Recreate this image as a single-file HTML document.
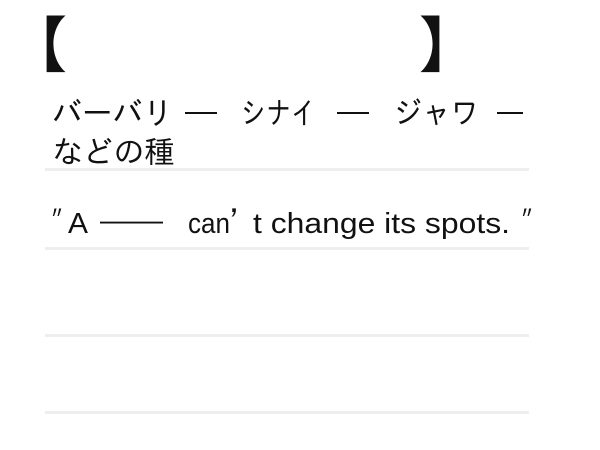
<!DOCTYPE html>
<html><head><meta charset="utf-8"><style>
body{margin:0;width:600px;height:450px;background:#fff;position:relative;overflow:hidden;font-family:"IPAGothic","Noto Sans CJK JP",sans-serif;color:#111}
.a{position:absolute;white-space:nowrap}
.br{font-size:60px;line-height:60px;top:12px;font-weight:bold;font-family:"Noto Sans CJK JP",sans-serif}
.hr{position:absolute;left:45px;width:484px;height:3px;background:#eeeeee}
svg{position:absolute;left:0;top:0}
</style></head><body>
<div class="a br" style="left:7px">【</div>
<div class="a br" style="left:419px">】</div>
<svg width="600" height="450" font-family="IPAGothic, 'Noto Sans CJK JP', sans-serif" fill="#111">
<g font-size="31">
<text x="52" y="124" textLength="121" lengthAdjust="spacingAndGlyphs">バーバリ</text>
<text x="185" y="121" font-family="Liberation Sans, sans-serif" textLength="32" lengthAdjust="spacingAndGlyphs">—</text>
<text x="241" y="124" textLength="75" lengthAdjust="spacingAndGlyphs">シナイ</text>
<text x="337" y="121" font-family="Liberation Sans, sans-serif" textLength="32" lengthAdjust="spacingAndGlyphs">—</text>
<text x="394" y="124" textLength="85" lengthAdjust="spacingAndGlyphs">ジャワ</text>
<text x="497" y="121" font-family="Liberation Sans, sans-serif" textLength="26" lengthAdjust="spacingAndGlyphs">—</text>
<text x="52" y="163" textLength="123" lengthAdjust="spacingAndGlyphs">などの種</text>
</g>
<g font-size="29">
<text x="51" y="233">″</text>
<text x="68" y="233" font-family="Liberation Sans, sans-serif" textLength="20" lengthAdjust="spacingAndGlyphs">A</text>
<text x="100" y="230" font-family="Liberation Sans, sans-serif" textLength="63" lengthAdjust="spacingAndGlyphs">—</text>
<text x="188" y="233" font-family="Liberation Sans, sans-serif" textLength="42" lengthAdjust="spacingAndGlyphs">can</text>
<text x="230" y="233">’</text>
<text x="253" y="233" font-family="Liberation Sans, sans-serif" textLength="257" lengthAdjust="spacingAndGlyphs">t change its spots.</text>
<text x="521" y="233">″</text>
</g>
</svg>
<div class="hr" style="top:168px"></div>
<div class="hr" style="top:247px"></div>
<div class="hr" style="top:334px"></div>
<div class="hr" style="top:411px"></div>
</body></html>
